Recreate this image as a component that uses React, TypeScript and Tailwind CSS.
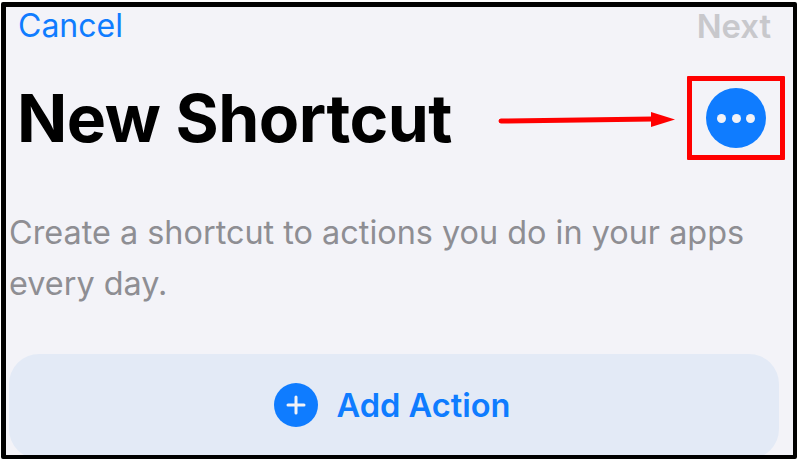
const FONT = "font-['Inter','Liberation_Sans',sans-serif]";

function DotsButton() {
  return (
    <div className="flex h-[60px] w-[60px] items-center justify-center gap-[5.5px] rounded-full bg-[#0f7cff]">
      <span className="h-[9px] w-[9px] rounded-full bg-[#f2f2f7]" />
      <span className="h-[9px] w-[9px] rounded-full bg-[#f2f2f7]" />
      <span className="h-[9px] w-[9px] rounded-full bg-[#f2f2f7]" />
    </div>
  );
}

function RedArrow() {
  return (
    <svg width="180" height="24" viewBox="0 0 180 24" className="absolute left-[492px] top-[101px]">
      <path d="M3 13 L155 11" stroke="#ff0000" strokeWidth="5" strokeLinecap="round" fill="none" />
      <path d="M153 4 L177 11.5 L153 19 Z" fill="#ff0000" />
    </svg>
  );
}

export default function App() {
  return (
    <div className={`h-[461px] w-[800px] overflow-hidden bg-white pb-[2px] pl-[1px] pr-[3px] pt-[2px] ${FONT}`}>
      <div className="relative h-[457px] overflow-hidden rounded-[2px] border-b-[4px] border-l-[5px] border-r-[4px] border-t-[5px] border-black bg-[#f3f3f8]">
        <div className="flex items-center justify-between pl-[12px] pr-[22px]">
          <span className="text-[32px] leading-[38px] text-[#0f7cff]">Cancel</span>
          <span className="text-[32.8px] font-semibold leading-[38px] text-[#c8c8cc]">Next</span>
        </div>

        <div className="flex items-center justify-between pl-[11px] pr-[27px] pt-[34px]">
          <h1 className="text-[66px] font-bold leading-[78px] tracking-[-0.5px] text-black">New Shortcut</h1>
          <DotsButton />
        </div>

        <p className="pl-[3px] pt-[50px] text-[32.4px] leading-[51px] text-[#8e8e93]">
          Create a shortcut to actions you do in your apps
          <br />
          every day.
        </p>

        <div className="ml-[3px] mr-[14px] mt-[45px] flex h-[105px] items-start justify-center gap-[18px] rounded-[30px] bg-[#e3eaf6] pr-[3px] pt-[29px]">
          <span className="flex h-[44px] w-[44px] items-center justify-center rounded-full bg-[#0f7cff]">
            <svg width="22" height="22" viewBox="0 0 22 22">
              <path d="M11 3 V19 M3 11 H19" stroke="#f2f2f7" strokeWidth="3" strokeLinecap="round" />
            </svg>
          </span>
          <span className="text-[32.6px] font-semibold leading-[44px] text-[#0f7cff]">Add Action</span>
        </div>

        <RedArrow />
        <div className="absolute left-[681px] top-[69px] h-[84px] w-[98px] rounded-[1px] border-[5px] border-[#ff0000]" />
      </div>
    </div>
  );
}
